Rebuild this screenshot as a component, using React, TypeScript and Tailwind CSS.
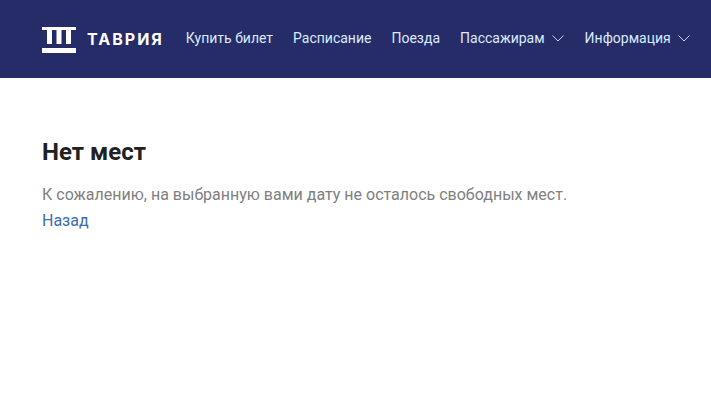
const Caret = () => (
  <svg width="13" height="7" viewBox="0 0 13 7" fill="none" stroke="#c3d4ee" strokeWidth="1">
    <path d="M0.5 0.5L6 6L11.5 0.5" />
  </svg>
);

const NavLink = ({ label, caret }: { label: string; caret?: boolean }) => (
  <a href="#" className="flex items-center gap-[7px] text-[14px] leading-[20px] text-[#dbeafe]">
    {label}
    {caret && <Caret />}
  </a>
);

const Logo = () => (
  <div className="flex items-center gap-[11px]">
    <svg width="34" height="26" viewBox="0 0 34 26" fill="white" className="translate-y-px">
      <rect x="0" y="0" width="34" height="3" />
      <rect x="5" y="3" width="5" height="14" />
      <rect x="14.5" y="3" width="5" height="14" />
      <rect x="24" y="3" width="5" height="14" />
      <rect x="0" y="21" width="34" height="5" />
    </svg>
    <span className="font-['Inter',sans-serif] text-[16px] leading-[20px] font-bold tracking-[2px] text-white">
      ТАВРИЯ
    </span>
  </div>
);

export default function App() {
  return (
    <div className="min-h-[408px] bg-white font-['Roboto',sans-serif]">
      <header className="flex h-[78px] items-center bg-[#262c67] pl-[42px]">
        <Logo />
        <nav className="ml-[22px] flex -translate-y-px items-center gap-[20px]">
          <NavLink label="Купить билет" />
          <NavLink label="Расписание" />
          <NavLink label="Поезда" />
          <NavLink label="Пассажирам" caret />
          <NavLink label="Информация" caret />
        </nav>
      </header>
      <main className="px-[42px] pt-[59px]">
        <h1 className="text-[24px] leading-[30px] font-bold text-[#212121]">Нет мест</h1>
        <p className="mt-[15px] text-[16px] leading-[26px] text-[#808080]">
          К сожалению, на выбранную вами дату не осталось свободных мест.
        </p>
        <a href="#" className="block text-[16px] leading-[26px] text-[#3b6cb4]">
          Назад
        </a>
      </main>
    </div>
  );
}
